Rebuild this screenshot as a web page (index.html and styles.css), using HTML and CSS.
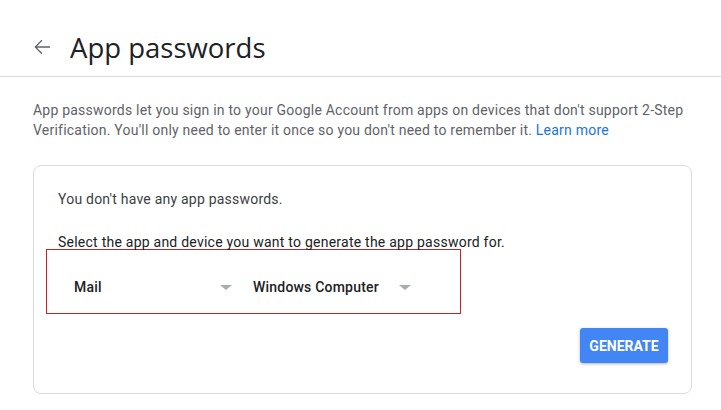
FILE: index.html
```html
<!DOCTYPE html>
<html>
<head>
<meta charset="utf-8">
<link rel="stylesheet" href="styles.css">
</head>
<body>
<header class="top">
  <svg class="back" width="24" height="24" viewBox="0 0 24 24"><path d="M20 11.25H6.9l5.5-5.5-0.9-0.9L4.4 12l7.1 7.15 0.9-0.9-5.5-5.5H20z" fill="#5f6368"/></svg>
  <h1 class="title">App passwords</h1>
</header>
<main class="content">
  <p class="intro">App passwords let you sign in to your Google Account from apps on devices that don't support 2-Step Verification. You'll only need to enter it once so you don't need to remember it. <a class="link" href="#">Learn more</a></p>
  <section class="card">
    <p class="none">You don't have any app passwords.</p>
    <p class="select">Select the app and device you want to generate the app password for.</p>
    <div class="pickers">
      <div class="picker app"><span>Mail</span><i class="caret"></i></div>
      <div class="picker device"><span>Windows Computer</span><i class="caret"></i></div>
    </div>
    <div class="actions"><button class="gen">GENERATE</button></div>
  </section>
</main>
</body>
</html>
```
FILE: styles.css
```css
* { box-sizing: border-box; }
body { margin: 0; background: #fff; font-family: Roboto, "Liberation Sans", sans-serif; width: 721px; height: 410px; overflow: hidden; }
.top { height: 77px; border-bottom: 1px solid #dadce0; display: flex; align-items: center; padding: 18px 0 0 30px; }
.back { margin-right: 16px; }
.title { margin: 0; font-family: "Open Sans", Roboto, sans-serif; font-weight: 400; font-size: 27.5px; color: #202124; letter-spacing: 0; }
.content { padding: 0 29px 0 33px; }
.intro { margin: 23px 0 0; font-size: 14px; line-height: 20px; color: #5f6368; letter-spacing: 0.22px; }
.link { color: #1a73e8; text-decoration: none; }
.card { margin-top: 25px; border: 1px solid #dadce0; border-radius: 8px; height: 229px; padding: 23px 23px 0 24px; }
.none { margin: 0; font-size: 14px; line-height: 20px; color: #3c4043; letter-spacing: 0.22px; }
.select { margin: 23px 0 0; font-size: 14px; line-height: 20px; color: #202124; letter-spacing: 0.24px; }
.pickers { margin: -3px 0 0 -12px; width: 415px; height: 65px; border: 1px solid #c5221f; display: flex; align-items: center; padding: 11px 0 0 27px; }
.picker { display: flex; align-items: center; font-size: 14px; color: #202124; font-weight: 500; letter-spacing: 0.2px; }
.picker.app { width: 179px; }
.picker .caret { width: 0; height: 0; border-left: 6px solid transparent; border-right: 6px solid transparent; border-top: 5px solid #a8adb2; display: inline-block; }
.picker.app .caret { margin-left: auto; margin-right: 21px; }
.picker.device .caret { margin-left: 20px; }
.actions { display: flex; justify-content: flex-end; margin-top: 14px; }
.gen { background: #4285f4; color: #fff; border: none; border-radius: 3px; font-family: Roboto, sans-serif; font-weight: 700; font-size: 14px; width: 88px; height: 35px; box-shadow: 0 1px 3px rgba(0,0,0,0.3); padding: 0; letter-spacing: 0; }
```
